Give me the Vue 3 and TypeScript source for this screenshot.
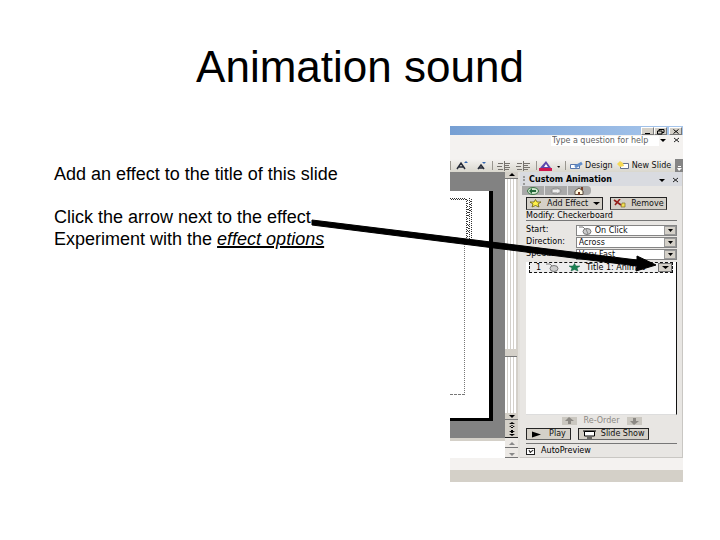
<script setup lang="ts">
import { ref } from 'vue'

interface Setting {
  id: string
  label: string
  value: string
  click?: boolean
}

const settings: Setting[] = [
  { id: 'start', label: 'Start:', value: 'On Click', click: true },
  { id: 'direction', label: 'Direction:', value: 'Across' },
  { id: 'speed', label: 'Speed:', value: 'Very Fast' },
]
const preview = ref(true)
</script>

<template>
  <main class="slide">
    <h1>Animation sound</h1>
    <div class="content">
      <div class="notes">
        <p>Add an effect to the title of this slide</p>
        <p>Click the arrow next to the effect.<br />Experiment with the <em>effect options</em></p>
      </div>

      <section class="app" aria-label="Custom Animation">
        <header class="titlebar">
          <button aria-label="Minimise"><svg viewBox="0 0 12 7"><path d="M3 5.500h5" /></svg></button>
          <button aria-label="Restore"><svg viewBox="0 0 12 7"><path d="M4 3V1.500h5v3H7M2.500 3h4.500v3H2.500z" /></svg></button>
          <button class="shut" aria-label="Close"><svg viewBox="0 0 12 7"><path d="M3.500 1.500l5 4M8.500 1.500l-5 4" /></svg></button>
        </header>
        <div class="menubar">
          <input aria-label="Help" value="Type a question for help" />
          <svg class="marks" viewBox="0 0 24 8"><path d="M1 3h6L4 6z" /><path class="line" d="M15 2l5 4M20 2l-5 4" /></svg>
        </div>
        <div class="toolbar">
          <svg class="tools" viewBox="0 0 116 12">
            <path stroke="#99968f" d="M.5 1v9M42.500 1v9M86.500 1v9M115.500 1v9" />
            <path fill="none" stroke="#262b38" stroke-width="1.500" d="M7 9l4-6 4 6M9 7h5M28 9l3-4 3 4M29 8h4" />
            <path fill="#3466ae" d="M14 3h4l-2-2zM32 2h4l-2 2z" />
            <path stroke="#77736e" d="M48 3.500h5M47 6.500h5M48 9.500h5M54.500 1v10M55 3.500h5M55 5.500h4M55 7.500h5M55 9.500h4M67 3.500h5M66 6.500h5M67 9.500h5M73.500 1v10M74 3.500h6M74 5.500h4M74 7.500h6M74 9.500h4" />
            <path fill="#5b48ad" d="M90 8l6-7 5 7z" /><path fill="#cf174f" d="M89 8h13v3H89z" />
            <path fill="#fff" d="M94 7l2-3 2 3z" /><path d="M107 6h3l-1 2z" />
          </svg>
          <button class="design"><svg viewBox="0 0 13 9"><path fill="#fff" stroke="#5877ac" d="M.5 3.500h9v4h-9z" /><path stroke="#638ec9" stroke-width="3" d="M5 6l7-4" /></svg>Design</button>
          <button><svg viewBox="0 0 13 9"><path fill="#fff" stroke="#64708c" d="M3.500 2.500h8v5h-8z" /><path fill="#f5d956" d="M0 3l3-3 3 2 1 3-4 1z" /></svg>New Slide</button>
          <button class="overflow" aria-label="Toolbar options"><svg viewBox="0 0 8 12"><path fill="#fff" d="M2 8h5L4 11zM3 6h3v1H3z" /></svg></button>
        </div>

        <div class="workspace">
          <div class="editor">
            <div class="canvas">
              <div class="paper">
                <svg class="outline" viewBox="0 0 24 42">
                  <path stroke-dasharray="1 1" d="M0 1.500h16M1 2.500h16M16.500 2v40M19.500 1v41M21.500 2v40" />
                  <path stroke-dasharray="1 2" d="M17.500 3v39M18.500 12v7M18.500 28v8M20.500 4v12" />
                </svg>
                <div class="body-box"></div>
              </div>
            </div>
            <div class="speaker"></div>
          </div>

          <div class="scroller">
            <button aria-label="Scroll up"><svg viewBox="0 0 12 6"><path d="M3 4h6L6 1z" /></svg></button>
            <div class="track"><i></i></div>
            <button aria-label="Scroll down"><svg viewBox="0 0 12 6"><path d="M3 2h6L6 5z" /></svg></button>
            <button class="jump" aria-label="Previous slide"><svg viewBox="0 0 12 8"><path d="M3 3h6L6 1zM3 6h6L6 4zM5 5h2v2H5z" /></svg></button>
            <button class="jump last" aria-label="Next slide"><svg viewBox="0 0 12 8"><path d="M3 2h6L6 4zM3 5h6L6 7zM5 1h2v3H5z" /></svg></button>
            <div class="mini">
              <button aria-label="Scroll notes up"><svg viewBox="0 0 12 6"><path d="M3 4h6L6 1z" /></svg></button>
              <button aria-label="Scroll notes down"><svg viewBox="0 0 12 6"><path d="M3 2h6L6 5z" /></svg></button>
            </div>
          </div>

          <aside class="pane">
            <header class="pane-head">
              <i class="grip"></i><h2>Custom Animation</h2>
              <svg class="marks" viewBox="0 0 24 8"><path d="M1 3h6L4 6z" /><path class="line" d="M15 2l5 4M20 2l-5 4" /></svg>
            </header>
            <nav class="pane-nav" aria-label="Task pane">
              <button aria-label="Back"><svg viewBox="0 0 12 8"><ellipse cx="6" cy="4" rx="5.500" ry="3.500" fill="#cfe7cd" stroke="#3d7547" /><path fill="#23683a" d="M2 4l3-3v2h4v2H5v2z" /></svg></button>
              <button class="middle" aria-label="Forward"><svg viewBox="0 0 12 8"><ellipse cx="6" cy="4" rx="5" ry="3" fill="#bdbdbd" stroke="#909090" /><path fill="#eee" d="M10 4L7 2v1H3v2h4v1z" /></svg></button>
              <button aria-label="Home"><svg viewBox="0 0 12 8"><path fill="#fff8df" stroke="#5b4c40" d="M2 4l4-3 4 3v3.500H2z" /><path fill="#7a3d25" d="M8 0h2v3H8zM5 5h2v3H5z" /></svg></button>
            </nav>

            <div class="pane-body">
              <div class="actions">
                <button><svg viewBox="0 0 13 9"><path fill="#fff047" stroke="#6b6211" stroke-width=".8" d="M6.500.5l1.500 2.500h4L9 5l1 3-3.500-1.500L3 8l1-3-3-2h4z" /></svg>Add Effect<svg class="caret" viewBox="0 0 7 5"><path d="M0 1h7L3.500 4z" /></svg></button>
                <button><svg viewBox="0 0 13 9"><path fill="none" stroke="#961f1b" stroke-width="1.600" d="M1 1l7 5M7 0L2 6" /><path fill="#f5df50" stroke="#7d7028" stroke-width=".7" d="M9 4h3v4H8z" /></svg>Remove</button>
              </div>
              <h3>Modify: Checkerboard</h3>
              <div v-for="item in settings" :key="item.id" class="setting">
                <label :for="item.id">{{ item.label }}</label>
                <div class="field">
                  <svg v-if="item.click" class="mouse" viewBox="0 0 13 9"><path stroke="#777" fill="none" d="M0 1h4l2 2" /><ellipse cx="8" cy="5.500" rx="4" ry="3" fill="#ccc" stroke="#777" /><path stroke="#888" d="M7 3l2 5" /></svg>
                  <select :id="item.id" :class="{ inset: item.click }"><option>{{ item.value }}</option></select>
                  <span class="drop"><svg viewBox="0 0 7 5"><path d="M1 1h5L3.500 4z" /></svg></span>
                </div>
              </div>

              <div class="effects">
                <div class="effect">
                  <span>1</span>
                  <svg viewBox="0 0 13 9"><path stroke="#777" fill="none" d="M0 1h4l2 2" /><ellipse cx="8" cy="5.500" rx="4" ry="3" fill="#ccc" stroke="#777" /></svg>
                  <svg class="star" viewBox="0 0 13 9"><path fill="#198151" stroke="#155a3e" stroke-width=".5" d="M6.500.5l1.500 2.500h4L9 5l1 3-3.500-1.500L3 8l1-3-3-2h4z" /></svg>
                  <span class="name">Title 1: Animat</span>
                  <button aria-label="Effect menu"><svg viewBox="0 0 7 5"><path d="M0 1h7L3.500 4z" /></svg></button>
                </div>
              </div>

              <div class="reorder">
                <button disabled aria-label="Move up"><svg viewBox="0 0 13 8"><path d="M2 4l4-4 5 4H8v3H5V4z" /></svg></button>
                <span>Re-Order</span>
                <button disabled aria-label="Move down"><svg viewBox="0 0 13 8"><path d="M2 4l4 4 5-4H8V1H5v3z" /></svg></button>
              </div>
              <div class="playback">
                <button><svg viewBox="0 0 13 8"><path d="M1 1l9 3-9 3z" /></svg>Play</button>
                <button><svg viewBox="0 0 13 8"><path fill="#fff" stroke="#000" d="M1.500 1h10v4.500h-10zM4 7.500h5M0 .5h13" /></svg>Slide Show</button>
              </div>
              <label class="preview"><input v-model="preview" type="checkbox" />AutoPreview</label>
            </div>
          </aside>
        </div>
        <div class="statusbar"></div>
      </section>

      <svg class="pointer" viewBox="0 0 720 355" preserveAspectRatio="none" aria-hidden="true">
        <path d="M312 94L637 134V130l19 9-20 6 1-5L312 99z" />
      </svg>
    </div>
  </main>
</template>

<style>
body { margin: 0; background: #fff; }
</style>

<style scoped>
* { box-sizing: border-box; }
.slide { padding-top: 42px; color: #000; font-family: "Liberation Sans", Arial, sans-serif; }
h1 { margin: 0 0 34px; font-size: 44px; font-weight: 400; line-height: 50px; text-align: center; }
.content { position: relative; display: grid; grid-template-columns: 450fr 233fr 37fr; }
.notes { padding: 37px 0 0 54px; font-size: 18px; line-height: 22px; white-space: nowrap; }
.notes p { margin: 0 0 21px; }
.notes em { text-decoration: underline; text-decoration-thickness: 2px; }
.pointer { position: absolute; top: 0; left: 0; width: 100%; height: 355px; stroke: #000; stroke-width: 1; pointer-events: none; }
.app { min-width: 0; background: #f4f2f0; font: 8px/10px "DejaVu Sans", Verdana, sans-serif; }
.app svg { display: block; flex: none; }
button { display: flex; align-items: center; justify-content: center; padding: 0; border: 0; border-radius: 0; background: none; color: #111; font: inherit; white-space: nowrap; }

.titlebar { display: flex; justify-content: flex-end; height: 9px; padding: 1px 1px 0 0; background: linear-gradient(90deg, #769fd3, #a8c7ed); }
.titlebar button { width: 13px; height: 8px; background: #d4d0c8; border: 1px solid #777; border-top-color: #fff; border-left-color: #fff; }
.titlebar .shut { margin-left: 2px; }
.titlebar svg { width: 12px; height: 7px; fill: none; stroke: #000; }
.menubar { display: flex; justify-content: flex-end; align-items: flex-start; height: 24px; padding-top: 1px; }
.menubar input { width: 108px; height: 10px; padding: 0 0 0 1px; border: 0; border-radius: 0; background: #fff; color: #606060; font: inherit; }
.marks { width: 24px; height: 8px; }
.marks .line { fill: none; stroke: #222; }
.toolbar { display: flex; align-items: center; height: 13px; background: linear-gradient(#f4f2f0, #d9d7ce); }
.tools { width: 116px; height: 12px; margin-right: 4px; }
.toolbar button { gap: 2px; margin-right: 4px; }
.toolbar button svg { width: 13px; height: 9px; }
.toolbar .overflow { width: 8px; height: 13px; margin: 0 0 0 auto; background: #858585; }
.toolbar .overflow svg { width: 8px; height: 12px; }

.workspace { display: flex; height: 286px; }
.editor { display: flex; flex: 56; flex-direction: column; }
.canvas { flex: 1; padding: 19px 12px 17px 0; background: #828282; }
.paper { height: 100%; border: solid #000; border-width: 0 4px 3px 0; background: #fff; padding-top: 6px; }
.outline { width: 24px; height: 42px; fill: none; stroke: #333; }
.body-box { width: 15px; height: 156px; border-right: 1px dotted #777; border-bottom: 1px dashed #777; }
.speaker { height: 20px; border-top: 3px solid #d4d0c8; background: #fff; }
.scroller { display: flex; flex: 13; flex-direction: column; background: #d4d0c8; border-right: 2px solid #e4e2dd; }
.scroller button { height: 7px; border-bottom: 1px solid #777; }
.scroller button svg { width: 12px; height: 6px; }
.scroller .jump { height: 9px; border: 0; }
.scroller .jump svg { height: 8px; }
.scroller .last { border-bottom: 1px solid #222; }
.track { flex: 1; margin-right: 1px; padding-top: 170px; background: repeating-linear-gradient(90deg, #fff 0 2px, #d3d0ca 2px 3px); }
.track i { display: block; height: 8px; background: #d4d0c8; border-bottom: 1px solid #777; }
.mini { display: flex; flex-direction: column; justify-content: space-between; height: 20px; padding-top: 3px; background: #ece9e5; }
.mini svg { fill: #888; }

.pane { flex: 164; min-width: 0; border-right: 1px solid #c9c7c3; border-bottom: 1px solid #c9c7c3; background: #e8e6e3; }
.pane-head { display: flex; align-items: center; height: 14px; padding: 2px 0 0 3px; background: #d9dbe0; }
.grip { width: 2px; height: 9px; margin-right: 4px; border-left: 2px dotted #999; }
h2 { flex: 1; margin: 0; font-size: 8px; font-weight: 700; line-height: 10px; }
.pane-nav { display: flex; width: 69px; height: 9px; margin-left: 2px; border-radius: 0 4px 4px 0; background: #a9a9a9; }
.pane-nav button { width: 22px; }
.pane-nav .middle { width: 24px; border: solid #ddd; border-width: 0 1px; }
.pane-nav svg { width: 12px; height: 8px; }
.pane-body { padding: 2px 5px 0 6px; }
.actions, .playback { display: flex; gap: 7px; }
.actions button, .playback button { height: 12px; gap: 5px; padding: 0 4px; border: 1px solid #242424; border-bottom-color: #666; background: #d4d0c8; }
.actions button { height: 13px; padding: 0 2px; }
.actions svg, .playback svg { width: 13px; height: 9px; }
.actions .caret { width: 7px; height: 5px; }
h3 { margin: 1px 0 3px; border-bottom: 1px solid #777; font-size: 8px; font-weight: 400; line-height: 9px; }
.setting { display: flex; align-items: center; height: 12px; }
.setting label { flex: 50; }
.field { position: relative; flex: 102; height: 11px; }
.field select { display: block; width: 100%; height: 11px; padding: 0 12px 0 2px; appearance: none; border: 1px solid #858585; border-radius: 0; background: #fff; color: #111; font: inherit; line-height: 9px; }
.field .inset { padding-left: 18px; }
.mouse { position: absolute; top: 1px; left: 3px; width: 13px; height: 9px; }
.drop { position: absolute; top: 1px; right: 1px; display: flex; align-items: center; justify-content: center; width: 12px; height: 9px; border: 1px solid #999; background: #d4d0c8; pointer-events: none; }
.drop svg { width: 7px; height: 5px; }
.effects { height: 153px; margin-top: 2px; padding: 0 3px; border-right: 1px solid #111; border-bottom: 1px solid #ddd; background: #fff; }
.effect { display: flex; align-items: center; gap: 5px; height: 11px; padding-left: 6px; border: 1px dashed #111; background: #eee; line-height: 8px; }
.effect svg { width: 13px; height: 9px; }
.effect .star { margin-left: 4px; }
.name { flex: 1; white-space: nowrap; }
.effect button { width: 14px; height: 9px; background: #d4d0c8; border: 1px solid #777; }
.effect button svg { width: 7px; height: 5px; }
.reorder { display: flex; align-items: center; justify-content: center; gap: 7px; height: 12px; color: #8c8984; }
.reorder button { width: 15px; height: 8px; background: #cbc8c1; }
.reorder svg { width: 13px; height: 8px; fill: #8c8984; }
.playback { margin-top: 1px; padding-bottom: 3px; border-bottom: 1px solid #777; }
.preview { display: flex; align-items: center; gap: 6px; height: 14px; }
.preview input { position: relative; width: 9px; height: 7px; margin: 0; appearance: none; border: 1px solid #222; background: #fff; }
.preview input:checked::after { position: absolute; top: 0; left: 2px; width: 3px; height: 2px; border: solid #222; border-width: 0 0 1px 1px; content: ""; transform: rotate(-35deg); }
.statusbar { height: 24px; border-bottom: 12px solid #d4d0c8; }
</style>
